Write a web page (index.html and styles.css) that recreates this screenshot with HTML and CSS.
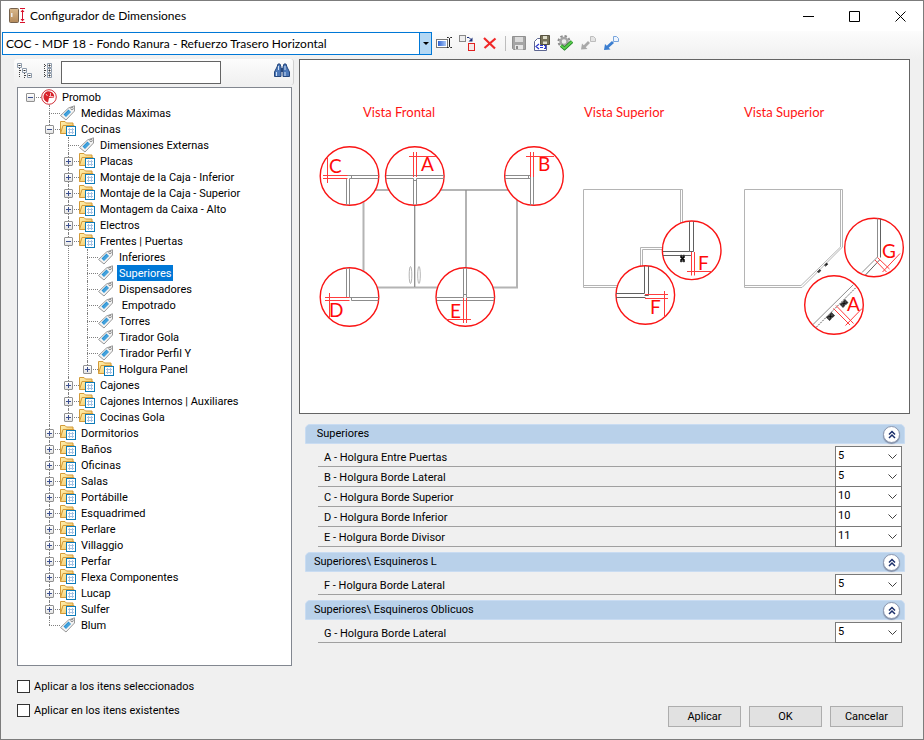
FILE: index.html
```html
<!DOCTYPE html>
<html lang="es">
<head>
<meta charset="utf-8">
<meta name="viewport" content="width=device-width, initial-scale=1">
<title>Configurador de Dimensiones</title>
<link rel="stylesheet" href="styles.css">
</head>
<body>
<svg class="sprite" aria-hidden="true">
  <defs>
    <linearGradient id="gold" x1="0" y1="0" x2="1" y2="1"><stop offset="0" stop-color="#fff0b0"/><stop offset="1" stop-color="#f3c25c"/></linearGradient>
    <linearGradient id="wood" x1="0" y1="0" x2="0" y2="1"><stop offset="0" stop-color="#d9b98d"/><stop offset="1" stop-color="#b48a5a"/></linearGradient>
    <linearGradient id="sky" x1="0" y1="0" x2="1" y2="0"><stop offset="0" stop-color="#2f62d0"/><stop offset="1" stop-color="#a9c8fa"/></linearGradient>
    <symbol id="folder" viewBox="0 1 18 16">
      <path d="M1.500 13.500V1.500H6l1.500 1.500h6.500v3" fill="url(#gold)" stroke="#d39a38"/>
      <path d="M1.500 13.500L4 5.500h11l-1 8z" fill="url(#gold)" stroke="#d39a38"/>
      <rect x="7.500" y="6.500" width="9" height="9" fill="#fff" stroke="#0e7bb8"/>
      <path d="M9 9.500h6M9 12.500h6M10.500 8v6M13.500 8v6" stroke="#a5c3e4" fill="none"/>
    </symbol>
    <symbol id="tag" viewBox="0 0 18 16">
      <path d="M1.500 10.500L9.500 3L15.500 .8L15.500 6L7 15z" fill="#f4f4f4" stroke="#989898" stroke-linejoin="round"/>
      <circle cx="13" cy="3.500" r="1.200" fill="#fff" stroke="#8a8a8a"/>
      <path d="M4.500 9.500L9.500 4.500L12 7L7 12z" fill="#2791d3"/>
      <path d="M6 10.500l4.500-4.500M7 11.500l4.500-4.500" stroke="#8cc8ee" stroke-width=".6"/>
    </symbol>
    <symbol id="brand" viewBox="0 0 18 16">
      <circle cx="9" cy="8" r="7.300" fill="#fff" stroke="#d03038" stroke-width="1"/>
      <path d="M8 2.300C5 3 3.200 5.500 3.600 9c.4 2.300 2 3.800 4.400 4.500L9 9l5-.5C15 6 12.500 2 8 2.300z" fill="#d8232b"/>
      <path d="M10.500 4v3M9 7.500h4.500M6 5l1.500 2" stroke="#fff" stroke-width=".7"/>
    </symbol>
    <symbol id="disk" viewBox="0 0 16 16">
      <path d="M1.500 1.500h13v13h-12l-1-1z" fill="#a5a5a5" stroke="#909090"/>
      <rect x="4" y="2" width="8" height="5" fill="#dcdcdc"/>
      <rect x="4" y="10" width="8" height="4.500" fill="#e6e6e6"/><rect x="5" y="11" width="2" height="3" fill="#8a8a8a"/>
    </symbol>
    <symbol id="chevrons" viewBox="0 0 8 9"><path d="M1 4.500L4 1.500L7 4.500M1 8L4 5L7 8" fill="none" stroke="#1b2f6b" stroke-width="1.500"/></symbol>
    <symbol id="hinge" viewBox="-3 -4 6 8"><path d="M-2-3.500h1.500v2h1v-2H2V-1L1 0l1 1v2.500H.5v-2h-1v2H-2V1l1-1-1-1z" stroke="#444"/></symbol>
  </defs>
</svg>

<div class="window">
  <header class="titlebar">
    <svg class="app-icon" viewBox="0 0 16 16" aria-hidden="true">
      <rect x=".5" y=".5" width="9" height="14" rx="1" fill="url(#wood)" stroke="#75614c"/>
      <rect x="2" y="5" width="1.500" height="4" fill="#eee"/>
      <path d="M11 .5h5M11 14.500h5M13.500 2v11" stroke="#d8112b"/><path d="M11.500 4l2-2.500 2 2.500zM11.500 11l2 2.500 2-2.500z" fill="#d8112b"/>
    </svg>
    <h1>Configurador de Dimensiones</h1>
    <button class="caption" type="button" aria-label="Minimizar"><svg viewBox="0 0 11 11"><path d="M0 5.500h11"/></svg></button>
    <button class="caption" type="button" aria-label="Maximizar"><svg viewBox="0 0 11 11"><path d="M.5.5h10v10H.5z"/></svg></button>
    <button class="caption" type="button" aria-label="Cerrar"><svg viewBox="0 0 11 11"><path d="M.5.5l10 10M10.500.5l-10 10"/></svg></button>
  </header>

  <div class="toolbar">
    <div class="preset">
      <select aria-label="Configuración"><option>COC - MDF 18 - Fondo Ranura - Refuerzo Trasero Horizontal</option></select>
      <span class="preset-arrow" aria-hidden="true"></span>
    </div>
    <button class="tool" type="button" aria-label="Renombrar"><svg viewBox="0 0 16 16"><rect x=".5" y="4.500" width="11" height="8" fill="#fff" stroke="#777"/><rect x="2" y="6" width="8" height="5" fill="url(#sky)"/><path d="M11 2.500h1.500l1 1 1-1H16M13.500 3.500v8M11 12.500h1.500l1-1 1 1H16" fill="none" stroke="#222"/></svg></button>
    <button class="tool" type="button" aria-label="Reemplazar"><svg viewBox="0 0 16 16"><rect x=".5" y=".5" width="6" height="6" fill="#eee" stroke="#888"/><rect x="9.500" y="8.500" width="6" height="7" fill="#f4e8e8" stroke="#e02020"/><path d="M8 2.500h2l2 2" fill="none" stroke="#1b2f7b"/><path d="M13.500 2.500v4h-4z" fill="#1b2f7b"/></svg></button>
    <button class="tool" type="button" aria-label="Eliminar"><svg viewBox="0 0 16 16"><path d="M2 3l11 10.500M13.500 3.500L2.500 13" fill="none" stroke="#f02828" stroke-width="2.200"/></svg></button>
    <span class="separator"></span>
    <button class="tool" type="button" aria-label="Guardar"><svg viewBox="0 0 16 16"><use href="#disk"/></svg></button>
    <button class="tool" type="button" aria-label="Exportar"><svg viewBox="0 0 16 16"><path d="M.5 15.500v-9l3-3h9v12z" fill="#fff" stroke="#5d6690"/><path d="M6.500.5h9v9h-9z" fill="#77725a" stroke="#55513e"/><path d="M9 1h4v3H9zM9 6.500h4V9H9z" fill="#dedcc8"/><path d="M5 9l-3 2.500L5 14M6 10.500h3M6 12.500h3M10 10.500h1.500v3H10" fill="none" stroke="#2a36c8" stroke-width="1.200"/></svg></button>
    <button class="tool" type="button" aria-label="Validar"><svg viewBox="0 0 16 16"><circle cx="7" cy="6.500" r="5.500" fill="none" stroke="#8c8c8c" stroke-width="2" stroke-dasharray="2.400 1.900"/><circle cx="7" cy="6.500" r="3.500" fill="#eee" stroke="#a4a4a4" stroke-width="2.400"/><path d="M4 10.500l3.500 3L15 6.500" fill="none" stroke="#1c7a22" stroke-width="3.400"/><path d="M4 10.500l3.500 3L15 6.500" fill="none" stroke="#58cc4c" stroke-width="2"/></svg></button>
    <button class="tool" type="button" aria-label="Restaurar"><svg viewBox="0 0 16 16"><path d="M1 14.500l1-6 1.800 1.800L8 6l2 2-4.300 4.200L7.500 14z" fill="#a9a9a9"/><path d="M10.500 1.500h3l2 2v3h-5z" fill="#e4e4e4" stroke="#bdbdbd"/></svg></button>
    <button class="tool" type="button" aria-label="Aplicar valores"><svg viewBox="0 0 16 16"><path d="M1 15l1-6 1.800 1.800L9 6l2 2-5.300 4.700L7.500 14.500z" fill="#3b7ed0"/><path d="M10.500 1.500h3l2 2v3h-5z" fill="#eef5ff" stroke="#78a5dc"/></svg></button>
  </div>

  <main class="content">
    <section class="browser">
      <div class="searchbar">
        <button class="tool" type="button" aria-label="Contraer todo"><svg viewBox="0 0 16 16"><path d="M2.500 5v9.500M7.500 10v5M3 7.500h3M8 12.500h3" fill="none" stroke="#444" stroke-dasharray="1 1"/><path d="M.5.5h4v4h-4zM5.500 5.500h4v4h-4zM10.500 10.500h4v4h-4z" fill="#fff" stroke="#8e9bab"/><path d="M1.500 2.500h2M6.500 7.500h2M11.500 12.500h2" stroke="#333"/></svg></button>
        <button class="tool" type="button" aria-label="Expandir todo"><svg viewBox="0 0 16 16"><path d="M3.500 1v14M4 2.500h3M4 7.500h3M4 12.500h3" fill="none" stroke="#444" stroke-dasharray="1 1"/><path d="M6.500.5h4v4h-4zM6.500 5.500h4v4h-4zM6.500 10.500h4v4h-4z" fill="#fff" stroke="#8e9bab"/><path d="M7.500 2.500h2M8.500 1.500v2M7.500 7.500h2M8.500 6.500v2M7.500 12.500h2M8.500 11.500v2" stroke="#333"/></svg></button>
        <input type="text" aria-label="Buscar">
        <button class="tool find" type="button" aria-label="Buscar"><svg viewBox="0 0 16 16"><path d="M3 4l1-3h2l1 3v9.500H.5V9zM13 4l-1-3h-2L9 4v9.500h6.500V9z" fill="#4c78b8" stroke="#26477c"/><path d="M7 5h2v4H7z" fill="#26477c"/><path d="M2.500 9v4M11 9v4M4.500 3v4M11 3v4" stroke="#cfe0f5"/></svg></button>
      </div>

      <nav class="tree" aria-label="Categorías">
        <ul class="root">
          <li><div class="node"><button class="toggle open" type="button" aria-label="Contraer"></button><svg><use href="#brand"/></svg><span>Promob</span></div>
            <ul>
              <li><div class="node leaf"><svg><use href="#tag"/></svg><span>Medidas Máximas</span></div></li>
              <li><div class="node"><button class="toggle open" type="button" aria-label="Contraer"></button><svg><use href="#folder"/></svg><span>Cocinas</span></div>
                <ul>
                  <li><div class="node leaf"><svg><use href="#tag"/></svg><span>Dimensiones Externas</span></div></li>
                  <li><div class="node"><button class="toggle" type="button" aria-label="Expandir"></button><svg><use href="#folder"/></svg><span>Placas</span></div></li>
                  <li><div class="node"><button class="toggle" type="button" aria-label="Expandir"></button><svg><use href="#folder"/></svg><span>Montaje de la Caja - Inferior</span></div></li>
                  <li><div class="node"><button class="toggle" type="button" aria-label="Expandir"></button><svg><use href="#folder"/></svg><span>Montaje de la Caja - Superior</span></div></li>
                  <li><div class="node"><button class="toggle" type="button" aria-label="Expandir"></button><svg><use href="#folder"/></svg><span>Montagem da Caixa - Alto</span></div></li>
                  <li><div class="node"><button class="toggle" type="button" aria-label="Expandir"></button><svg><use href="#folder"/></svg><span>Electros</span></div></li>
                  <li><div class="node"><button class="toggle open" type="button" aria-label="Contraer"></button><svg><use href="#folder"/></svg><span>Frentes | Puertas</span></div>
                    <ul>
                      <li><div class="node leaf"><svg><use href="#tag"/></svg><span>Inferiores</span></div></li>
                      <li><div class="node leaf"><svg><use href="#tag"/></svg><span class="selected">Superiores</span></div></li>
                      <li><div class="node leaf"><svg><use href="#tag"/></svg><span>Dispensadores</span></div></li>
                      <li><div class="node leaf"><svg><use href="#tag"/></svg><span> Empotrado</span></div></li>
                      <li><div class="node leaf"><svg><use href="#tag"/></svg><span>Torres</span></div></li>
                      <li><div class="node leaf"><svg><use href="#tag"/></svg><span>Tirador Gola</span></div></li>
                      <li><div class="node leaf"><svg><use href="#tag"/></svg><span>Tirador Perfil Y</span></div></li>
                      <li><div class="node"><button class="toggle" type="button" aria-label="Expandir"></button><svg><use href="#folder"/></svg><span>Holgura Panel</span></div></li>
                    </ul>
                  </li>
                  <li><div class="node"><button class="toggle" type="button" aria-label="Expandir"></button><svg><use href="#folder"/></svg><span>Cajones</span></div></li>
                  <li><div class="node"><button class="toggle" type="button" aria-label="Expandir"></button><svg><use href="#folder"/></svg><span>Cajones Internos | Auxiliares</span></div></li>
                  <li><div class="node"><button class="toggle" type="button" aria-label="Expandir"></button><svg><use href="#folder"/></svg><span>Cocinas Gola</span></div></li>
                </ul>
              </li>
              <li><div class="node"><button class="toggle" type="button" aria-label="Expandir"></button><svg><use href="#folder"/></svg><span>Dormitorios</span></div></li>
              <li><div class="node"><button class="toggle" type="button" aria-label="Expandir"></button><svg><use href="#folder"/></svg><span>Baños</span></div></li>
              <li><div class="node"><button class="toggle" type="button" aria-label="Expandir"></button><svg><use href="#folder"/></svg><span>Oficinas</span></div></li>
              <li><div class="node"><button class="toggle" type="button" aria-label="Expandir"></button><svg><use href="#folder"/></svg><span>Salas</span></div></li>
              <li><div class="node"><button class="toggle" type="button" aria-label="Expandir"></button><svg><use href="#folder"/></svg><span>Portábille</span></div></li>
              <li><div class="node"><button class="toggle" type="button" aria-label="Expandir"></button><svg><use href="#folder"/></svg><span>Esquadrimed</span></div></li>
              <li><div class="node"><button class="toggle" type="button" aria-label="Expandir"></button><svg><use href="#folder"/></svg><span>Perlare</span></div></li>
              <li><div class="node"><button class="toggle" type="button" aria-label="Expandir"></button><svg><use href="#folder"/></svg><span>Villaggio</span></div></li>
              <li><div class="node"><button class="toggle" type="button" aria-label="Expandir"></button><svg><use href="#folder"/></svg><span>Perfar</span></div></li>
              <li><div class="node"><button class="toggle" type="button" aria-label="Expandir"></button><svg><use href="#folder"/></svg><span>Flexa Componentes</span></div></li>
              <li><div class="node"><button class="toggle" type="button" aria-label="Expandir"></button><svg><use href="#folder"/></svg><span>Lucap</span></div></li>
              <li><div class="node"><button class="toggle" type="button" aria-label="Expandir"></button><svg><use href="#folder"/></svg><span>Sulfer</span></div></li>
              <li><div class="node leaf"><svg><use href="#tag"/></svg><span>Blum</span></div></li>
            </ul>
          </li>
        </ul>
      </nav>
    </section>

    <section class="details">
      <svg class="diagram" viewBox="300 60 609 353" role="img" aria-label="Vistas de holguras">
        <g class="label">
          <text x="363" y="117">Vista Frontal</text>
          <text x="584" y="117">Vista Superior</text>
          <text x="744" y="117">Vista Superior</text>
        </g>
        <!-- front view -->
        <path class="body thick" d="M363.500 190H517M363.500 190V287.500H517V190"/>
        <path class="body mid" d="M414.700 190V287M466 190V287"/>
        <ellipse class="body" cx="410.500" cy="275" rx="1.300" ry="8.500"/><ellipse class="body" cx="419" cy="275" rx="1.300" ry="8.500"/>
        <!-- corner cabinet, square front -->
        <path class="body" d="M583.500 189.500H682.500V248M680.500 189.500V248M583.500 189.500V287.500H640M583.500 285.500H640M640.500 287V247.500H682M642.500 287V249.500H682"/>
        <!-- corner cabinet, oblique front -->
        <path class="body" d="M744.500 189.500H842.500V247L802 287.500H744.500zM840.500 190V247L801 285.500H745"/>
        <use href="#hinge" x="-2" y="-2" width="3" height="4" transform="translate(819.500 271.500) rotate(45)"/>
        <use href="#hinge" x="-2" y="-2" width="3" height="4" transform="translate(826.500 265) rotate(45)"/>
        <g class="lens">
          <circle cx="349.500" cy="176" r="29.300"/><circle cx="414.800" cy="176" r="29.300"/><circle cx="534" cy="176" r="29.300"/>
          <circle cx="349.500" cy="297" r="29.300"/><circle cx="465.300" cy="297" r="29.300"/>
          <circle cx="691.700" cy="250.300" r="29.300"/><circle cx="645.300" cy="295" r="29.300"/>
          <circle cx="874" cy="247.500" r="29.300"/><circle cx="834" cy="305" r="29.300"/>
        </g>
        <path class="edge" d="M346.500 175.500H378.500M349.500 178.500H378.500M346.500 178V205M349.500 178.500V205M351.500 175.500V178.500"/>
        <path class="edge" d="M386 175.500H444M386 178.500H413.500V205M444 178.500H416.500V205M413.500 180.500H416.500"/>
        <path class="edge" d="M505 175.500H530.500V205M505 178.500H530.500M533.500 176V205M528.500 175.500V178.500"/>
        <path class="edge" d="M346.500 268V297.500M349.500 268V297.500H378.500M351.500 297V300.500H378.500"/>
        <path class="edge" d="M463.500 268V297.500H436.500M466.500 268V297.500H494.500M437 300.500H494M463.500 294.500H466.500"/>
        <path class="edge dark" d="M689.500 221.500V251.500H663M693.500 221.500V251.500H689.500M663 255.500H691.500"/>
        <path class="edge dark" d="M644.500 266V293.500H616M648.500 266V295.500H644.500M616 297.500H645.500"/>
        <path class="edge" d="M877.500 218.500V257L862 272.500"/><path class="edge dark" d="M880.500 219V257.500M879.500 260L865.500 275"/>
        <path class="edge" d="M812.500 325L853.500 284.500"/><path class="edge dark" stroke-dasharray="2 1" d="M816 327.500L856 287.500"/>
        <use href="#hinge" x="-3" y="-4" width="6" height="8" transform="translate(682.500 258.500)"/>
        <use href="#hinge" x="-3" y="-4" width="6" height="8" transform="translate(830.500 316.500) rotate(45)"/>
        <use href="#hinge" x="-3" y="-4" width="6" height="8" transform="translate(844 303.500) rotate(45)"/>
        <g class="measure">
          <path d="M323 175.500H347.500M323 178.500H347.500M327.500 157V183"/>
          <path d="M413.500 152V177M416.500 152V177M409 156.500H436"/>
          <path d="M530.500 152V177M533.500 152V177M526 156.500H554"/>
          <path d="M325 297.500H349.500M325 300.500H349.500M329.500 293V318"/>
          <path d="M463.500 298V323M466.500 298V323M446 319.500H471"/>
          <path d="M691.500 252V275.500M694.500 252V275.500M687 271.500H712"/>
          <path d="M645 294.500H668M645 298.500H668M664.500 291V317"/>
          <path d="M875 260L886.500 272M877.500 257.500L889.500 269M882.500 272L900 253.500"/>
          <path d="M833.500 308.500L850 325M836 305.500L853.500 323.500M845.500 325.500L862 308.500"/>
        </g>
        <g class="letter">
          <text x="329" y="173">C</text><text x="421" y="171">A</text><text x="538" y="171">B</text>
          <text x="329" y="317">D</text><text x="450" y="318">E</text>
          <text x="698" y="270">F</text><text x="650" y="314">F</text>
          <text x="882" y="258">G</text><text x="847" y="311">A</text>
        </g>
      </svg>

      <form class="groups">
        <section class="group">
          <header><h2> Superiores</h2><button class="collapse" type="button" aria-label="Contraer grupo"><svg><use href="#chevrons"/></svg></button></header>
          <div class="rows">
            <div class="row"><label for="a">A - Holgura Entre Puertas</label><select id="a"><option>5</option></select></div>
            <div class="row"><label for="b">B - Holgura Borde Lateral</label><select id="b"><option>5</option></select></div>
            <div class="row"><label for="c">C - Holgura Borde Superior</label><select id="c"><option>10</option></select></div>
            <div class="row"><label for="d">D - Holgura Borde Inferior</label><select id="d"><option>10</option></select></div>
            <div class="row"><label for="e">E - Holgura Borde Divisor</label><select id="e"><option>11</option></select></div>
          </div>
        </section>
        <section class="group">
          <header><h2>Superiores\ Esquineros L</h2><button class="collapse" type="button" aria-label="Contraer grupo"><svg><use href="#chevrons"/></svg></button></header>
          <div class="rows">
            <div class="row"><label for="f">F - Holgura Borde Lateral</label><select id="f"><option>5</option></select></div>
          </div>
        </section>
        <section class="group">
          <header><h2>Superiores\ Esquineros Oblicuos</h2><button class="collapse" type="button" aria-label="Contraer grupo"><svg><use href="#chevrons"/></svg></button></header>
          <div class="rows">
            <div class="row"><label for="g">G - Holgura Borde Lateral</label><select id="g"><option>5</option></select></div>
          </div>
        </section>
      </form>
    </section>
  </main>

  <footer class="footer">
    <div class="checks">
      <label><input type="checkbox">Aplicar a los itens seleccionados</label>
      <label><input type="checkbox">Aplicar en los itens existentes</label>
    </div>
    <div class="actions">
      <button type="button">Aplicar</button>
      <button type="button">OK</button>
      <button type="button">Cancelar</button>
    </div>
  </footer>
</div>
</body>
</html>
```
FILE: styles.css
```css
* { box-sizing: border-box; }

body {
  margin: 0;
  background: #f0f0f0;
  color: #000;
  font: 11px/16px Roboto, "Liberation Sans", sans-serif;
}

button, input, select { margin: 0; font: inherit; color: inherit; }
h1, h2 { margin: 0; font: inherit; }
ul { margin: 0; padding: 0; list-style: none; }
svg { display: block; }
.sprite { position: absolute; width: 0; height: 0; }

.window {
  display: flex;
  flex-direction: column;
  min-height: 100vh;
  border: 1px solid #7c7c7c;
}

/* Title bar */
.titlebar {
  display: flex;
  align-items: center;
  height: 30px;
  padding-left: 8px;
  background: #fff;
}
.titlebar h1 { flex: 1; margin-left: 5px; font: 12px/16px Lato, sans-serif; }
.app-icon { width: 16px; height: 16px; }
.caption {
  display: grid;
  place-items: center;
  width: 46px;
  height: 30px;
  padding: 0;
  border: 0;
  background: none;
}
.caption svg { width: 11px; height: 11px; fill: none; stroke: #000; }

/* Toolbars */
.toolbar, .searchbar {
  display: flex;
  align-items: center;
  background: linear-gradient(#fcfcfc, #f0f0f0);
}
.toolbar { height: 28px; padding: 0 0 3px 1px; gap: 1px; }
.preset { position: relative; width: 430px; height: 23px; }
.preset select {
  appearance: none;
  width: 100%;
  height: 100%;
  padding: 0 16px 0 3px;
  border: 1px solid #0078d7;
  border-radius: 0;
  background: #fff;
  font: 12px/16px Lato, sans-serif;
}
.preset-arrow {
  position: absolute;
  top: 0;
  right: 0;
  display: grid;
  place-items: center;
  width: 13px;
  height: 100%;
  border: 1px solid #0078d7;
  background: #b3d7f3;
  pointer-events: none;
}
.preset-arrow::after {
  content: "";
  border: 3px solid transparent;
  border-top-color: #000;
  border-bottom: 0;
}
.tool {
  display: grid;
  place-items: center;
  width: 22px;
  height: 22px;
  padding: 0;
  border: 0;
  background: none;
}
.toolbar .tool { padding-bottom: 2px; }
.tool svg { width: 16px; height: 16px; }
.separator { width: 1px; height: 15px; margin: 0 1px 0 3px; background: #bdbdbd; }

/* Main area */
.content {
  flex: 1;
  display: grid;
  grid-template-columns: 280px minmax(0, 1fr);
  gap: 5px;
  padding: 0 13px 0 13px;
}
.browser { display: flex; flex-direction: column; }
.searchbar {
  height: 26px;
  margin-bottom: 2px;
  border-right: 1px solid #d0d0d0;
  border-radius: 3px;
}
.searchbar .tool { padding-bottom: 2px; }
.searchbar .tool + .tool { margin-left: 2px; }
.searchbar input {
  width: 160px;
  height: 23px;
  margin-left: 1px;
  padding: 0 4px;
  border: 1px solid #646464;
  background: #fff;
}
.searchbar .find { margin-left: auto; }

/* Tree */
.tree {
  flex: 1;
  margin: 0 2px 0 3px;
  padding: 1px 3px;
  border: 1px solid #828790;
  background: #fff;
}
.tree ul ul { padding-left: 19px; }
.tree li { position: relative; }
.tree li li::before {
  content: "";
  position: absolute;
  top: 0;
  bottom: 0;
  left: 9px;
  border-left: 1px dotted #808080;
}
.tree li li:last-child::before { bottom: auto; height: 8px; }
.node { position: relative; display: flex; align-items: center; height: 16px; }
.node::before {
  content: "";
  position: absolute;
  top: 8px;
  left: 9px;
  width: 11px;
  border-top: 1px dotted #808080;
}
.node svg { flex: none; width: 18px; height: 16px; margin-right: 2px; }
.node.leaf svg { margin-left: 19px; }
.node span { padding: 2px 2px 0; line-height: 14px; white-space: pre; }
.node .selected { background: #0078d7; color: #fff; }
.toggle {
  position: relative;
  width: 9px;
  height: 9px;
  margin: 1px 5px 0 5px;
  padding: 0;
  border: 1px solid #919191;
  border-radius: 1px;
  background:
    linear-gradient(#3c5090, #3c5090) center / 5px 1px no-repeat,
    linear-gradient(#3c5090, #3c5090) center / 1px 5px no-repeat,
    linear-gradient(#fff, #e4e4e4);
}
.toggle.open {
  background:
    linear-gradient(#3c5090, #3c5090) center / 5px 1px no-repeat,
    linear-gradient(#fff, #e4e4e4);
}

/* Diagram */
.diagram {
  width: 100%;
  height: auto;
  border: 1px solid #646464;
  background: #fff;
}
.diagram path, .diagram ellipse { fill: none; }
.body { stroke: #b4b4b4; stroke-width: 1; }
.thick { stroke-width: 2; }
.mid { stroke: #8c8c8c; stroke-width: 1.3; }
.edge { stroke: #8c8c8c; }
.dark { stroke: #606060; }
.lens circle { fill: #fff; stroke: #fa1414; stroke-width: 1.4; }
.measure path { stroke: #ff3c3c; }
.label text { fill: #ff1414; font: 13px Lato, sans-serif; }
.letter text { fill: #ff0a0a; font: 19px Lato, sans-serif; }

/* Property groups */
.groups { display: grid; gap: 5px; padding: 10px 5px 0 6px; }
.group header {
  display: flex;
  align-items: center;
  justify-content: space-between;
  height: 20px;
  padding: 0 4px 0 8px;
  border: 1px solid #c9dcf2;
  border-radius: 5px 5px 0 0;
  background: #b9d1ea;
}
.group h2 { white-space: pre; }
.collapse {
  display: grid;
  place-items: center;
  width: 17px;
  height: 17px;
  padding: 0;
  border: 1px solid #8c98b0;
  border-radius: 50%;
  background: #fff;
  box-shadow: 0 1px 1px #7f8ca5;
}
.collapse svg { width: 8px; height: 9px; }
.rows { margin-top: 3px; padding: 0 3px 0 13px; }
.row { display: flex; height: 20px; border-bottom: 1px solid #a0a0a0; }
.row label { flex: 1; padding: 3px 0 0 6px; }
.row select {
  appearance: none;
  width: 67px;
  height: 21px;
  margin-top: -1px;
  padding: 0 18px 2px 2px;
  border: 1px solid #7a7a7a;
  border-radius: 0;
  background: #fff url("data:image/svg+xml,%3Csvg xmlns='http://www.w3.org/2000/svg' viewBox='0 0 9 5'%3E%3Cpath d='M.5.5l4 4 4-4' fill='none' stroke='%23404040'/%3E%3C/svg%3E") right 4px center / 9px 5px no-repeat;
}

/* Footer */
.footer {
  display: flex;
  justify-content: space-between;
  align-items: flex-end;
  padding: 13px 20px 12px 16px;
}
.checks { display: grid; gap: 8px; padding-bottom: 8px; }
.checks label { display: flex; align-items: center; gap: 4px; }
.checks input {
  appearance: none;
  width: 13px;
  height: 13px;
  margin-bottom: 2px;
  border: 1px solid #333;
  background: #fff;
}
.actions { display: flex; gap: 8px; }
.actions button {
  width: 73px;
  height: 21px;
  padding: 0;
  border: 1px solid #adadad;
  background: #e1e1e1;
}
```
